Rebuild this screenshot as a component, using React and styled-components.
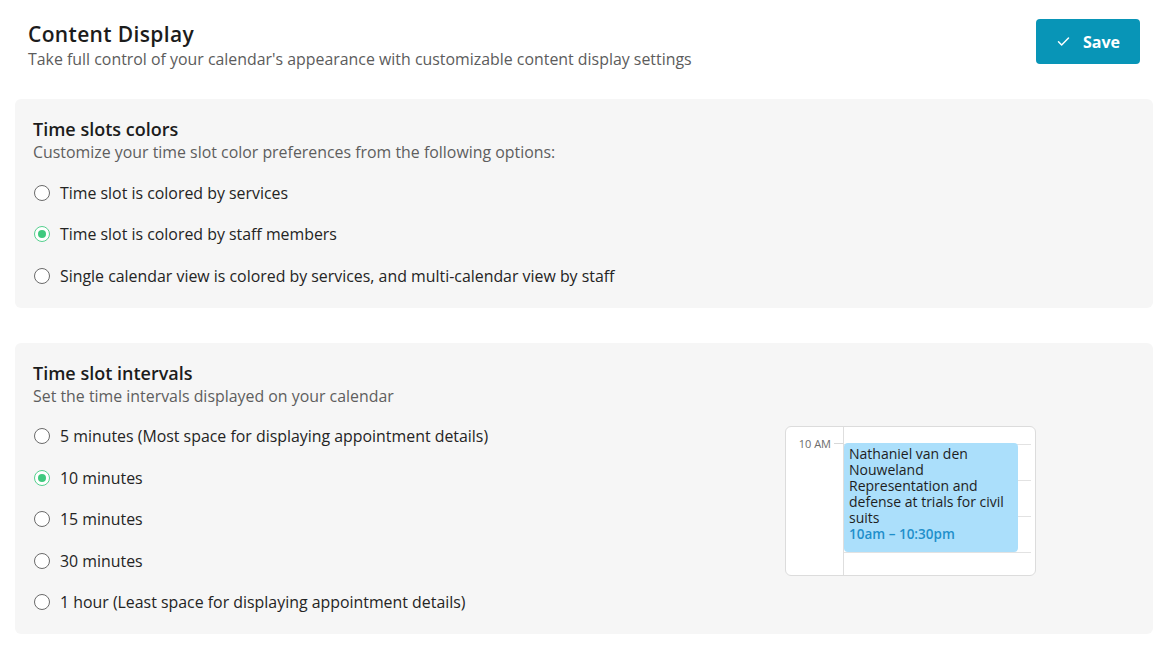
import React from "react";
import styled, { createGlobalStyle } from "styled-components";

const Global = createGlobalStyle`
  * { box-sizing: border-box; }
  body { margin: 0; background: #fff; font-family: "Open Sans", "Noto Sans", sans-serif; color: #1f1f1f; }
`;

const Page = styled.div`
  padding: 19px 15px 12px 15px;
  display: flex;
  flex-direction: column;
  width: 1168px;
`;

const Header = styled.div`
  display: flex;
  justify-content: space-between;
  align-items: flex-start;
  padding: 0 13px 0 13px;
`;

const TitleBlock = styled.div`
  display: flex;
  flex-direction: column;
  padding-top: 1px;
`;

const Title = styled.h1`
  margin: 0;
  font-size: 21px;
  letter-spacing: 0.35px;
  font-weight: 600;
  line-height: 28px;
  color: #1c1c1c;
`;

const Subtitle = styled.p`
  margin: 0;
  font-size: 15.9px;
  line-height: 22px;
  color: #5c5c5c;
`;

const SaveButton = styled.button`
  display: flex;
  align-items: center;
  gap: 12px;
  height: 45px;
  width: 104px;
  padding: 0 0 0 20px;
  border: none;
  border-radius: 4px;
  background: #0895b7;
  color: #fff;
  font-family: inherit;
  font-size: 16px;
  font-weight: 700;
  cursor: pointer;
`;

const Panel = styled.section`
  margin-top: ${(p) => p.$mt}px;
  background: #f6f6f6;
  border-radius: 6px;
  padding: 18px 18px 11px 18px;
  display: flex;
  justify-content: space-between;
  align-items: flex-start;
`;

const PanelMain = styled.div`
  display: flex;
  flex-direction: column;
`;

const PanelTitle = styled.h2`
  margin: 0;
  font-size: 18px;
  font-weight: 600;
  line-height: 24px;
  color: #1c1c1c;
`;

const PanelSub = styled.p`
  margin: 0 0 9px 0;
  font-size: 15.9px;
  line-height: 22px;
  color: #5e5e5e;
`;

const Option = styled.label`
  display: flex;
  align-items: center;
  gap: 10px;
  height: 41.5px;
  font-size: 15.9px;
  color: #242424;
  cursor: pointer;
`;

const RadioCircle = styled.span`
  width: 16px;
  height: 16px;
  margin-left: 1px;
  border-radius: 50%;
  border: 1.5px solid ${(p) => (p.$on ? "#55d08e" : "#6a6a6a")};
  display: flex;
  align-items: center;
  justify-content: center;
  background: #fff;
  flex: none;
  &::after {
    content: "";
    width: 8px;
    height: 8px;
    border-radius: 50%;
    background: #3ec97e;
    display: ${(p) => (p.$on ? "block" : "none")};
  }
`;

const Preview = styled.div`
  width: 251px;
  height: 150px;
  margin-top: 65px;
  margin-right: 99px;
  background: #fff;
  border: 1px solid #dcdcdc;
  border-radius: 6px;
  display: flex;
  overflow: hidden;
`;

const TimeCol = styled.div`
  width: 58px;
  flex: none;
  border-right: 1px solid #dedede;
  padding-top: 10px;
  display: flex;
  justify-content: flex-end;
`;

const TimeLabel = styled.span`
  display: flex;
  align-items: center;
  gap: 3px;
  height: 14px;
  font-size: 11px;
  color: #6c6c6c;
  &::after {
    content: "";
    width: 9px;
    height: 1px;
    background: #d8d8d8;
  }
`;

const Grid = styled.div`
  flex: 1;
  position: relative;
  padding-top: 17px;
  padding-right: 4px;
`;

const Slot = styled.div`
  height: 36px;
  border-top: 1px solid #e2e2e2;
`;

const Event = styled.div`
  position: absolute;
  left: 0;
  top: 16px;
  width: 174px;
  height: 109px;
  background: #abdffb;
  border-radius: 4px;
  padding: 3px 5px 2px 5px;
  font-size: 14px;
  line-height: 16px;
  color: #1e1e1e;
`;

const EventName = styled.div`
  font-weight: 500;
`;

const EventTime = styled.div`
  color: #1f8fcb;
  font-weight: 600;
  font-size: 13.5px;
  line-height: 16px;
`;

const CheckIcon = () => (
  <svg width="15" height="15" viewBox="0 0 24 24" fill="none" stroke="#fff" strokeWidth="2.4" strokeLinecap="round" strokeLinejoin="round">
    <path d="M4 12.5l5 5L20 6.5" />
  </svg>
);

const colorOpts = [
  "Time slot is colored by services",
  "Time slot is colored by staff members",
  "Single calendar view is colored by services, and multi-calendar view by staff",
];
const intervalOpts = [
  "5 minutes (Most space for displaying appointment details)",
  "10 minutes",
  "15 minutes",
  "30 minutes",
  "1 hour (Least space for displaying appointment details)",
];

export default function App() {
  return (
    <>
      <Global />
      <Page>
        <Header>
          <TitleBlock>
            <Title>Content Display</Title>
            <Subtitle>Take full control of your calendar's appearance with customizable content display settings</Subtitle>
          </TitleBlock>
          <SaveButton>
            <CheckIcon />
            Save
          </SaveButton>
        </Header>

        <Panel $mt={29}>
          <PanelMain>
            <PanelTitle>Time slots colors</PanelTitle>
            <PanelSub>Customize your time slot color preferences from the following options:</PanelSub>
            {colorOpts.map((o, i) => (
              <Option key={o}>
                <RadioCircle $on={i === 1} />
                {o}
              </Option>
            ))}
          </PanelMain>
        </Panel>

        <Panel $mt={35}>
          <PanelMain>
            <PanelTitle>Time slot intervals</PanelTitle>
            <PanelSub>Set the time intervals displayed on your calendar</PanelSub>
            {intervalOpts.map((o, i) => (
              <Option key={o}>
                <RadioCircle $on={i === 1} />
                {o}
              </Option>
            ))}
          </PanelMain>
          <Preview>
            <TimeCol>
              <TimeLabel>10 AM</TimeLabel>
            </TimeCol>
            <Grid>
              <Slot />
              <Slot />
              <Slot />
              <Slot />
              <Event>
                <EventName>Nathaniel van den Nouweland</EventName>
                <div>Representation and defense at trials for civil suits</div>
                <EventTime>10am – 10:30pm</EventTime>
              </Event>
            </Grid>
          </Preview>
        </Panel>
      </Page>
    </>
  );
}
